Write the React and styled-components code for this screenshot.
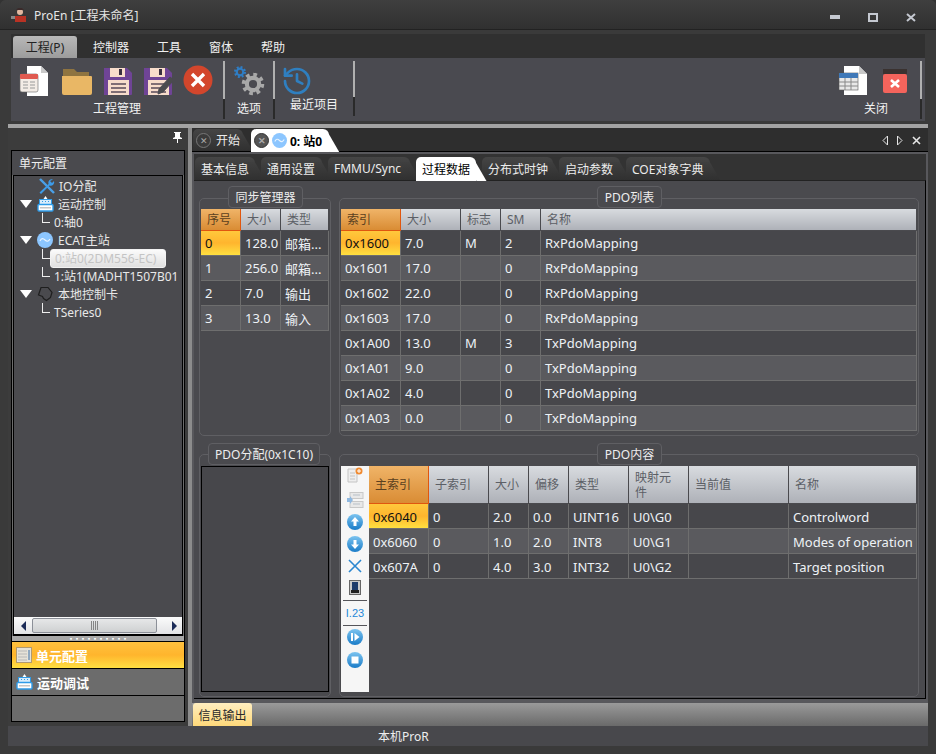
import React from "react";
import styled, { createGlobalStyle } from "styled-components";
import { History } from "lucide-react";

const GlobalStyle = createGlobalStyle`
  html, body { margin: 0; padding: 0; background: #333; }
  body { font-family: "Noto Sans", "Noto Sans CJK SC", sans-serif; font-size: 12px; color: #e8e8e8; }
  * { box-sizing: border-box; }
`;

const Window = styled.div`
  width: 936px;
  height: 754px;
  display: flex;
  flex-direction: column;
  padding: 0 8px 8px;
  overflow: hidden;
  background: #3a3a3a;
  border-radius: 6px 6px 0 0;
`;

const TitleBar = styled.div`
  height: 30px;
  margin: 0 -8px;
  padding: 0 15px 0 11px;
  display: flex;
  align-items: center;
  gap: 7px;
  background: linear-gradient(#3f3f3f, #303030);
  border-bottom: 1px solid #222;
`;

const TitleText = styled.span`
  flex: 1;
  font-size: 12px;
  color: #e6e6e6;
`;

const WinControls = styled.div`
  display: flex;
  gap: 28px;
  margin: 6px 5px 0 0;
  align-items: center;
`;

const MenuStrip = styled.div`
  height: 24px;
  margin: 4px 3px 0;
  padding-left: 2px;
  display: flex;
  align-items: flex-end;
  background: #303030;
`;

const MenuTab = styled.div`
  height: 22px;
  width: ${(p) => p.$w}px;
  display: flex;
  align-items: center;
  justify-content: center;
  font-size: 12px;
  border-radius: 3px 3px 0 0;
  color: ${(p) => (p.$active ? "#222" : "#f0f0f0")};
  background: ${(p) => (p.$active ? "linear-gradient(#b8b8b8, #9c9c9c)" : "transparent")};
`;

const Ribbon = styled.div`
  height: 63px;
  margin: 0 3px;
  display: flex;
  background: #4a4a50;
`;

const RibbonGroup = styled.div`
  width: ${(p) => p.$w}px;
  margin-right: ${(p) => p.$mr || 0}px;
  height: 63px;
  display: flex;
  flex-direction: column;
  align-items: center;
`;

const RibbonIcons = styled.div`
  height: 39px;
  width: 100%;
  display: flex;
  align-items: flex-start;
  justify-content: ${(p) => (p.$start ? "flex-start" : "center")};
  gap: ${(p) => p.$gap || 0}px;
  padding: 7px ${(p) => p.$pr || 0}px 0 ${(p) => p.$pl || 0}px;
`;

const RibbonLabel = styled.div`
  font-size: 12px;
  line-height: 16px;
  margin-top: ${(p) => p.$mt || 0}px;
  color: #f2f2f2;
  white-space: nowrap;
`;

const RibbonSep = styled.div`
  width: 2px;
  height: ${(p) => p.$h || 58}px;
  margin-top: 3px;
  background: linear-gradient(#b0b0b0 0 65%, #2a2a2a 65%);
`;

const Spacer = styled.div`
  flex: 1;
`;

const RibbonEnd = styled.div`
  flex: 0 0 3px;
`;

const Main = styled.div`
  flex: 1;
  margin-top: 3px;
  display: flex;
  border-top: 4px solid #a3a3a3;
  min-height: 0;
`;

const LeftColumn = styled.div`
  width: 180px;
  display: flex;
  flex-direction: column;
  padding: 0 3px 4px;
  background: #3c3c3c;
`;

const PinRow = styled.div`
  height: 22px;
  display: flex;
  justify-content: flex-end;
  align-items: center;
  padding: 0 3px 4px 0;
`;

const LeftPanel = styled.div`
  flex: 1;
  display: flex;
  flex-direction: column;
  background: #6c6c6c;
  border: 1px solid #000;
  min-height: 0;
`;

const PanelHeader = styled.div`
  height: 24px;
  flex: none;
  padding-left: 7px;
  display: flex;
  align-items: center;
  background: #4a4a4e;
  font-size: 12px;
  color: #eee;
`;

const TreeBox = styled.div`
  flex: 1;
  position: relative;
  margin: 0 1px;
  border: 1px solid #000;
  border-bottom-width: 2px;
  background: #4a4a4e;
  display: flex;
  flex-direction: column;
  min-height: 0;
`;

const TreeBody = styled.div`
  flex: 1;
  overflow: hidden;
  padding-top: 1px;
`;

const TreeRow = styled.div`
  height: 18px;
  display: flex;
  align-items: center;
  white-space: nowrap;
  font-size: 12px;
  color: #e8e8e8;
  padding-left: ${(p) => p.$indent}px;
`;

const Expander = styled.span`
  width: 0;
  height: 0;
  margin-right: 4px;
  border-left: 6px solid transparent;
  border-right: 6px solid transparent;
  border-top: 8px solid #fff;
`;

const IconSlot = styled.span`
  width: 18px;
  height: 18px;
  margin-right: 4px;
  display: inline-flex;
  align-items: center;
  justify-content: center;
  flex: none;
`;

const Elbow = styled.span`
  width: 8px;
  height: 10px;
  margin-top: -8px;
  margin-right: 4px;
  flex: none;
  border-left: 1px solid #eee;
  border-bottom: 1px solid #eee;
`;

const SelectedLabel = styled.span`
  position: relative;
  margin-left: -4px;
  padding: 0 4px;
  height: 19px;
  line-height: 18px;
  width: 116px;
  overflow: hidden;
  border-radius: 3px;
  border: 1px solid #f2f2f2;
  color: #c4c4c4;
  background: linear-gradient(#fafafa, #e0e0e0);
`;

const ScrollBar = styled.div`
  height: 17px;
  flex: none;
  display: flex;
  align-items: center;
  padding: 0 2px 0 7px;
  background: linear-gradient(#fbfbfb, #e2e3e5);
`;

const ScrollArrow = styled.span`
  width: 0;
  height: 0;
  border-top: 5px solid transparent;
  border-bottom: 5px solid transparent;
  ${(p) => (p.$right ? "border-left: 5px solid #1c2c58;" : "border-right: 5px solid #1c2c58;")}
`;

const ScrollThumb = styled.div`
  width: 125px;
  height: 15px;
  margin: 0 15px 0 6px;
  border: 1px solid #8c9098;
  border-radius: 2px;
  background: linear-gradient(#e6e7e8, #cfd1d2);
  display: flex;
  align-items: center;
  justify-content: center;
  gap: 1px;
`;

const GripLine = styled.span`
  width: 1px;
  height: 9px;
  background: #858585;
`;

const Splitter = styled.div`
  height: 6px;
  flex: none;
  padding-top: 1px;
  display: flex;
  justify-content: center;
  background: #a8a8a8;
  border-bottom: 1px solid #000;
  color: #fff;
  font-size: 6px;
  line-height: 4px;
  letter-spacing: 0;
`;

const NavItem = styled.div`
  height: 27px;
  flex: none;
  padding-left: 4px;
  display: flex;
  align-items: center;
  gap: 4px;
  font-size: 13px;
  font-weight: 700;
  color: #fff;
  border-bottom: 1px solid #000;
  background: ${(p) => (p.$active ? "linear-gradient(#ffc13e, #ffb52d 50%, #ffdf42)" : "#6c6c6c")};
`;

const NavRest = styled.div`
  height: 25px;
  flex: none;
  background: #6c6c6c;
`;

const VSplit = styled.div`
  width: 4px;
  background: #8c8c8c;
`;

const RightColumn = styled.div`
  flex: 1;
  display: flex;
  flex-direction: column;
  min-width: 0;
`;

const DocTabs = styled.div`
  height: 24px;
  flex: none;
  padding: 2px 0 0 1px;
  display: flex;
  align-items: flex-end;
  gap: 8px;
  background: #2e2e2e;
  border-bottom: 1px solid #000;
`;

const Tab = styled.div`
  position: relative;
  height: ${(p) => (p.$h || 22) + (p.$active ? 1 : 0)}px;
  margin-bottom: ${(p) => (p.$active ? -1 : 0)}px;
  width: ${(p) => p.$w}px;
  padding-left: ${(p) => p.$pl || 6}px;
  flex: none;
  display: flex;
  align-items: center;
  gap: ${(p) => p.$gap || 0}px;
  font-size: 12px;
  white-space: nowrap;
  font-weight: ${(p) => (p.$bold ? 700 : 400)};
  color: ${(p) => (p.$active ? "#000" : "#ececec")};
  background: ${(p) => (p.$active ? "#fff" : "linear-gradient(#454545, #303030)")};
  border-radius: 5px 6px 0 0;
  z-index: ${(p) => (p.$active ? 2 : 1)};
  &::after {
    content: "";
    position: absolute;
    top: 5px;
    bottom: 0;
    right: -5px;
    width: 10px;
    background: ${(p) => (p.$active ? "#fff" : "linear-gradient(#3f3f3f, #303030)")};
    transform: skewX(30deg);
    z-index: -1;
  }
`;

const TabClose = styled.span`
  width: 15px;
  height: 15px;
  border-radius: 50%;
  display: inline-flex;
  align-items: center;
  justify-content: center;
  background: ${(p) => (p.$dark ? "#555" : "#3a3a3a")};
  border: 1px solid ${(p) => (p.$dark ? "#333" : "#777")};
  color: #aaa;
  font-size: 9px;
  line-height: 1;
`;

const DocControls = styled.div`
  margin-left: auto;
  height: 22px;
  padding-right: 7px;
  display: flex;
  align-items: center;
  gap: 9px;
`;

const DocPanel = styled.div`
  height: 551px;
  flex: none;
  display: flex;
  flex-direction: column;
  padding: 2px 2px 4px 2px;
  background: #58585c;
`;

const SubTabs = styled.div`
  height: 26px;
  flex: none;
  padding: 3px 0 0 1px;
  display: flex;
  align-items: flex-end;
  gap: 6px;
  background: #333;
`;

const Content = styled.div`
  flex: 1;
  display: grid;
  grid-template-columns: 132px 580px;
  grid-template-rows: 238px 243px;
  gap: 18px 8px;
  padding: 17px 0 0 5px;
  background: #4a4a4e;
  border-top: 1px solid #222;
  border-right: 1px solid #000;
  border-bottom: 1px solid #000;
`;

const Group = styled.div`
  position: relative;
  padding: ${(p) => p.$pt || 10}px 1px 0;
  border: 1px solid #5f5f63;
  border-radius: 5px;
`;

const Legend = styled.div`
  position: absolute;
  top: ${(p) => p.$top || -13}px;
  left: ${(p) => p.$left}px;
  width: ${(p) => p.$w}px;
  height: 22px;
  display: flex;
  align-items: center;
  justify-content: center;
  border: 1px solid #5f5f63;
  border-radius: 4px;
  background: #4a4a4e;
  font-size: 12px;
  white-space: nowrap;
  color: #eee;
  z-index: 2;
`;

const HeadRow = styled.div`
  display: grid;
  grid-template-columns: ${(p) => p.$cols};
  height: ${(p) => p.$h || 22}px;
`;

const HeadCell = styled.div`
  padding: 0 6px;
  display: flex;
  align-items: center;
  font-size: 12px;
  line-height: 15px;
  color: ${(p) => (p.$sel ? "#5a4020" : "#5c5f66")};
  background: ${(p) => (p.$sel ? "linear-gradient(#f0b468, #d98c34)" : "linear-gradient(#d8dbdf, #aeb1b8)")};
  border-right: 1px solid ${(p) => (p.$sel ? "#e0560f" : "#4a4a4e")};
  border-bottom: 1px solid ${(p) => (p.$sel ? "#e0560f" : "#4a4a4e")};
`;

const DataRow = styled.div`
  display: grid;
  grid-template-columns: ${(p) => p.$cols};
  height: 25px;
  background: ${(p) => (p.$alt ? "#5a5a5e" : "#47474b")};
`;

const DataCell = styled.div`
  padding: ${(p) => (p.$low ? 1 : 0)}px 3px 0 4px;
  display: flex;
  align-items: center;
  font-size: 13px;
  white-space: nowrap;
  overflow: hidden;
  color: ${(p) => (p.$sel ? "#111" : "#eef2f6")};
  background: ${(p) => (p.$sel ? "linear-gradient(#ffc83c, #ffb52e 50%, #ffe040)" : "transparent")};
  border-right: 1px solid #6e6e6e;
  border-bottom: 1px solid #6e6e6e;
`;

const BlackBox = styled.div`
  height: 226px;
  border: 1px solid #000;
  background: #47474b;
`;

const PdoContent = styled.div`
  height: 226px;
  display: flex;
`;

const ToolBar = styled.div`
  width: 28px;
  display: flex;
  flex-direction: column;
  align-items: center;
  background: #f6f6f6;
`;

const ToolSlot = styled.div`
  height: ${(p) => p.$h || 22}px;
  margin-top: ${(p) => p.$mt || 0}px;
  flex: none;
  display: flex;
  align-items: center;
  justify-content: center;
`;

const ToolSep = styled.div`
  width: 24px;
  height: 1px;
  margin-top: ${(p) => p.$mt || 0}px;
  flex: none;
  background: #55555a;
`;

const ToolText = styled.div`
  height: 24px;
  flex: none;
  display: flex;
  align-items: center;
  font-family: "Liberation Sans", sans-serif;
  font-size: 11px;
  color: #1e88d8;
`;

const ContentTable = styled.div`
  flex: 1;
`;

const InfoBar = styled.div`
  height: 23px;
  flex: none;
  padding-left: 1px;
  display: flex;
  align-items: flex-end;
  background: linear-gradient(#9a9a9a, #6a6a6a);
`;

const InfoTab = styled.div`
  width: 59px;
  height: 23px;
  display: flex;
  align-items: center;
  justify-content: center;
  font-size: 12px;
  color: #2a2a2a;
  border-radius: 3px 3px 0 0;
  background: linear-gradient(#ffeec0, #ffd97a);
`;

const StatusBar = styled.div`
  height: 20px;
  flex: none;
  padding-left: 370px;
  display: flex;
  align-items: center;
  background: #48484c;
  font-size: 12px;
  color: #eee;
`;

// ---- drawings ----

const AppLogo = () => (
  <svg width="16" height="16" viewBox="0 0 16 16">
    <rect x="0" y="9" width="7" height="3" fill="#888" />
    <rect x="4" y="9" width="11" height="6" fill="#b83224" />
    <circle cx="9" cy="5" r="3" fill="#e2b8a0" />
    <path d="M5 3h8l-2-2H7z" fill="#3a2a2a" />
  </svg>
);

const NewDocIcon = () => (
  <svg width="32" height="32" viewBox="0 0 32 32">
    <path d="M8 1h14l7 7v23H8z" fill="#fff" />
    <path d="M22 1l7 7h-7z" fill="#c9c9c9" />
    <rect x="1" y="9" width="18" height="18" rx="2" fill="#f3ece6" stroke="#666" strokeWidth="0.6" />
    <rect x="1" y="9" width="18" height="5" rx="1" fill="#e05a50" />
    <path d="M4 17h5M11 17h5M4 20h5M11 20h5M4 23h5M11 23h5" stroke="#999" strokeWidth="1.2" />
  </svg>
);

const FolderIcon = () => (
  <svg width="32" height="32" viewBox="0 0 32 32">
    <path d="M2 4h11l3 3h12v6H2z" fill="#8f7440" />
    <path d="M1 11h29a1 1 0 0 1 1 1v16a2 2 0 0 1-2 2H3a2 2 0 0 1-2-2z" fill="#e9b765" />
  </svg>
);

const SaveIcon = ({ pencil }) => (
  <svg width="30" height="32" viewBox="0 0 30 32">
    <path d="M1 3h23l5 5v21a1 1 0 0 1-1 1H1z" fill="#6f4496" />
    <rect x="7" y="3" width="15" height="9" fill="#f7dccb" />
    <rect x="16" y="4" width="3" height="6" fill="#3a3040" />
    <rect x="5" y="15" width="21" height="15" fill="#f7dccb" />
    <path d="M8 19h15M8 23h15M8 27h15" stroke="#5a4a5a" strokeWidth="1.3" />
    {pencil && <path d="M15 29l1-5L27 12l4 3-11 12z" fill="#4b4b4f" stroke="#4a4a50" strokeWidth="1" />}
  </svg>
);

const CloseBall = () => (
  <svg width="30" height="30" viewBox="0 0 30 30">
    <circle cx="15" cy="15" r="14.5" fill="#d3462c" />
    <path d="M9 9l12 12M21 9L9 21" stroke="#fff" strokeWidth="3.4" />
  </svg>
);

// body ring plus eight dashes round it for the teeth
const Gear = ({ cx, cy, r, color }) => (
  <g fill="none" stroke={color}>
    <circle cx={cx} cy={cy} r={r * 0.82} strokeWidth={r * 0.55} />
    <circle
      cx={cx}
      cy={cy}
      r={r * 1.2}
      strokeWidth={r * 0.6}
      strokeDasharray={`${r * 0.47} ${r * 0.472}`}
    />
  </g>
);

const GearsIcon = () => (
  <svg width="32" height="32" viewBox="0 0 32 32">
    <Gear cx={7} cy={7} r={4} color="#2f7dc4" />
    <Gear cx={20} cy={19} r={7.5} color="#a8a8a8" />
  </svg>
);

const TableDocIcon = () => (
  <svg width="30" height="31" viewBox="0 0 30 31">
    <path d="M6 1h15l8 8v21H6z" fill="#fff" />
    <path d="M21 1l8 8h-8z" fill="#c8c8c8" />
    <rect x="1" y="8" width="19" height="17" fill="#e8e8e8" stroke="#555" strokeWidth="0.6" />
    <rect x="1" y="8" width="19" height="5" fill="#3f78b8" />
    <path d="M7 13v12M13 13v12M1 17h19M1 21h19" stroke="#888" strokeWidth="1" />
  </svg>
);

const RedBoxIcon = () => (
  <svg width="24" height="28" viewBox="0 -4 24 28">
    <rect x="0" y="0" width="24" height="5" fill="#3a3230" />
    <rect x="0" y="5" width="24" height="19" rx="2" fill="#f4645c" />
    <path d="M8 11l8 7M16 11l-8 7" stroke="#fff" strokeWidth="2.6" />
  </svg>
);

const ToolsIcon = () => (
  <svg width="17" height="17" viewBox="0 0 17 17">
    <path d="M2 1l14 14" stroke="#4aa0e8" strokeWidth="2.4" />
    <path d="M15 1.5a3.5 3.5 0 0 0-4.5 4.5L1.5 14.5 3 16l8.5-8.5A3.5 3.5 0 0 0 16 3l-2 2-2-2z" fill="#3d9be8" />
  </svg>
);

const MotionIcon = () => (
  <svg width="17" height="16" viewBox="0 0 17 16">
    <path d="M8.5 0l2 3h-4z" fill="#fff" />
    <rect x="2.5" y="3.5" width="12" height="5" fill="#d8ecfb" stroke="#2f9be8" />
    <path d="M5 5.5h1M8 5.5h1M11 5.5h1" stroke="#2f9be8" />
    <rect x="1" y="8.5" width="15" height="6.500" rx="1" fill="#fff" stroke="#2f9be8" strokeWidth="1.4" />
    <rect x="3" y="11" width="11" height="1.500" fill="#c4c4c4" />
  </svg>
);

const EcatIcon = ({ size = 16 }) => (
  <svg width={size} height={size} viewBox="0 0 16 16">
    <circle cx="8" cy="8" r="8" fill="#8cc6ff" />
    <path d="M3 9c1.5-3 3-3 5-1s3.5 1.5 5-1" fill="none" stroke="#e8f4ff" strokeWidth="1.2" />
  </svg>
);

const CardIcon = () => (
  <svg width="16" height="16" viewBox="0 0 16 16">
    <path d="M4 1.5h7l4 5-1.5 5-4 3-3-2-1-2-4-1.5z" fill="none" stroke="#1e1e1e" strokeWidth="1.2" />
  </svg>
);

const NavCardIcon = () => (
  <svg width="16" height="16" viewBox="0 0 16 16">
    <rect x="0.5" y="0.5" width="15" height="15" fill="#e6e2d8" stroke="#b09a70" />
    <path d="M2 4h9M2 7h9M2 10h9M2 13h9" stroke="#b8b8b8" />
    <rect x="12" y="3" width="2" height="10" fill="#8fa8c0" />
  </svg>
);

const PinIcon = () => (
  <svg width="9" height="11" viewBox="0 0 9 11">
    <path d="M1 0h7v1H7v4l2 1v1H5v4H4V7H0V6l2-1V1H1z" fill="#fff" />
  </svg>
);

const WinMin = () => (
  <svg width="10" height="5" viewBox="0 0 10 5"><rect width="10" height="4" fill="#c4c8d0" /></svg>
);
const WinMax = () => (
  <svg width="10" height="9" viewBox="0 0 10 9"><rect x="1" y="1" width="8" height="7" fill="none" stroke="#c4c8d0" strokeWidth="2" /></svg>
);
const WinClose = () => (
  <svg width="10" height="9" viewBox="0 0 10 9"><path d="M1 1l8 7M9 1L1 8" stroke="#c4c8d0" strokeWidth="2" /></svg>
);

const TriLeft = () => (
  <svg width="6" height="11" viewBox="0 0 6 11"><path d="M5.5 1L1 5.5l4.5 4.5z" fill="none" stroke="#e6e6e6" /></svg>
);
const TriRight = () => (
  <svg width="6" height="11" viewBox="0 0 6 11"><path d="M.5 1L5 5.5.5 10z" fill="none" stroke="#e6e6e6" /></svg>
);
const DocX = () => (
  <svg width="9" height="9" viewBox="0 0 9 9"><path d="M1 1l7 7M8 1L1 8" stroke="#e6e6e6" strokeWidth="1.6" /></svg>
);

const BlueBall = ({ children }) => (
  <svg width="16" height="16" viewBox="0 0 16 16">
    <defs>
      <linearGradient id="ball" x1="0" y1="0" x2="0" y2="1">
        <stop offset="0" stopColor="#7cc4f0" />
        <stop offset="1" stopColor="#1a7cc8" />
      </linearGradient>
    </defs>
    <circle cx="8" cy="8" r="8" fill="url(#ball)" />
    {children}
  </svg>
);

const DocAddIcon = () => (
  <svg width="16" height="16" viewBox="0 0 16 16">
    <path d="M1 2h9v13H1z" fill="#eee" stroke="#c4c4c4" />
    <path d="M3 6h5M3 9h5M3 12h5" stroke="#c4c4c4" />
    <circle cx="12" cy="4" r="3.5" fill="#f08a30" />
    <path d="M10 4h4M12 2v4" stroke="#fff" />
  </svg>
);

const ListDisabledIcon = () => (
  <svg width="17" height="16" viewBox="0 0 17 16">
    <rect x="3" y="0.5" width="13" height="6" fill="#e8e8e8" stroke="#c8c8c8" />
    <rect x="3" y="9.5" width="13" height="6" fill="#e8e8e8" stroke="#c8c8c8" />
    <path d="M6 3h7M6 12h7" stroke="#b8c0c8" />
    <path d="M0 6h3V4l3 4-3 4v-2H0z" fill="#8fb8e0" />
  </svg>
);

const BlueCross = () => (
  <svg width="14" height="14" viewBox="0 0 14 14">
    <path d="M1 1l12 12M13 1L1 13" stroke="#2a86d0" strokeWidth="1.6" />
  </svg>
);

const ChipIcon = () => (
  <svg width="12" height="15" viewBox="0 0 12 15">
    <rect x="0.5" y="0.5" width="11" height="14" fill="#c8c8c8" stroke="#666" />
    <rect x="3" y="2" width="6" height="8" fill="#1c3a6a" />
    <rect x="2" y="10" width="8" height="3" fill="#222" />
  </svg>
);

const Grip = () => (
  <>
    {[0, 1, 2, 3].map((i) => (
      <GripLine key={i} />
    ))}
  </>
);

// ---- data ----

const syncCols = "40px 40px 48px";
const syncHead = ["序号", "大小", "类型"];
const syncRows = [
  ["0", "128.0", "邮箱..."],
  ["1", "256.0", "邮箱..."],
  ["2", "7.0", "输出"],
  ["3", "13.0", "输入"],
];

const pdoCols = "60px 60px 40px 40px 376px";
const pdoHead = ["索引", "大小", "标志", "SM", "名称"];
const pdoRows = [
  ["0x1600", "7.0", "M", "2", "RxPdoMapping"],
  ["0x1601", "17.0", "", "0", "RxPdoMapping"],
  ["0x1602", "22.0", "", "0", "RxPdoMapping"],
  ["0x1603", "17.0", "", "0", "RxPdoMapping"],
  ["0x1A00", "13.0", "M", "3", "TxPdoMapping"],
  ["0x1A01", "9.0", "", "0", "TxPdoMapping"],
  ["0x1A02", "4.0", "", "0", "TxPdoMapping"],
  ["0x1A03", "0.0", "", "0", "TxPdoMapping"],
];

const contentCols = "60px 60px 40px 40px 60px 60px 100px 128px";
const contentHead = ["主索引", "子索引", "大小", "偏移", "类型", "映射元件", "当前值", "名称"];
const contentRows = [
  ["0x6040", "0", "2.0", "0.0", "UINT16", "U0\\G0", "", "Controlword"],
  ["0x6060", "0", "1.0", "2.0", "INT8", "U0\\G1", "", "Modes of operation"],
  ["0x607A", "0", "4.0", "3.0", "INT32", "U0\\G2", "", "Target position"],
];

const subTabs = [
  ["基本信息", 60],
  ["通用设置", 61],
  ["FMMU/Sync", 82],
  ["过程数据", 60],
  ["分布式时钟", 71],
  ["启动参数", 61],
  ["COE对象字典", 84],
];

const Table = ({ cols, head, rows, headHeight, low }) => (
  <div>
    <HeadRow $cols={cols} $h={headHeight}>
      {head.map((h, i) => (
        <HeadCell key={h} $sel={i === 0}>
          {h}
        </HeadCell>
      ))}
    </HeadRow>
    {rows.map((r, i) => (
      <DataRow key={i} $cols={cols} $alt={i % 2 === 1}>
        {r.map((c, j) => (
          <DataCell key={j} $low={low} $sel={i === 0 && j === 0}>
            {c}
          </DataCell>
        ))}
      </DataRow>
    ))}
  </div>
);

const App = () => {
  return (
    <Window>
      <GlobalStyle />
      <TitleBar>
        <AppLogo />
        <TitleText>ProEn [工程未命名]</TitleText>
        <WinControls>
          <WinMin />
          <WinMax />
          <WinClose />
        </WinControls>
      </TitleBar>

      <MenuStrip>
        <MenuTab $w={64} $active>工程(P)</MenuTab>
        <MenuTab $w={68}>控制器</MenuTab>
        <MenuTab $w={48}>工具</MenuTab>
        <MenuTab $w={56}>窗体</MenuTab>
        <MenuTab $w={48}>帮助</MenuTab>
      </MenuStrip>

      <Ribbon>
        <RibbonGroup $w={212}>
          <RibbonIcons $gap={10} $pr={2}>
            <NewDocIcon />
            <FolderIcon />
            <SaveIcon />
            <SaveIcon pencil />
            <CloseBall />
          </RibbonIcons>
          <RibbonLabel $mt={4}>工程管理</RibbonLabel>
        </RibbonGroup>
        <RibbonSep />
        <RibbonGroup $w={48}>
          <RibbonIcons>
            <GearsIcon />
          </RibbonIcons>
          <RibbonLabel $mt={4}>选项</RibbonLabel>
        </RibbonGroup>
        <RibbonSep />
        <RibbonGroup $w={78}>
          <RibbonIcons $start $pl={6}>
            <History size={32} color="#2f7fc0" strokeWidth={2} />
          </RibbonIcons>
          <RibbonLabel>最近项目</RibbonLabel>
        </RibbonGroup>
        <RibbonSep $h={55} />
        <Spacer />
        <RibbonGroup $w={80} $mr={4}>
          <RibbonIcons $gap={15} $pr={7}>
            <TableDocIcon />
            <RedBoxIcon />
          </RibbonIcons>
          <RibbonLabel $mt={4}>关闭</RibbonLabel>
        </RibbonGroup>
        <RibbonSep />
        <RibbonEnd />
      </Ribbon>

      <Main>
        <LeftColumn>
          <PinRow>
            <PinIcon />
          </PinRow>
          <LeftPanel>
            <PanelHeader>单元配置</PanelHeader>
            <TreeBox>
              <TreeBody>
                <TreeRow $indent={23}>
                  <IconSlot>
                    <ToolsIcon />
                  </IconSlot>
                  IO分配
                </TreeRow>
                <TreeRow $indent={6}>
                  <Expander />
                  <IconSlot>
                    <MotionIcon />
                  </IconSlot>
                  运动控制
                </TreeRow>
                <TreeRow $indent={28}>
                  <Elbow />
                  0:轴0
                </TreeRow>
                <TreeRow $indent={6}>
                  <Expander />
                  <IconSlot>
                    <EcatIcon />
                  </IconSlot>
                  ECAT主站
                </TreeRow>
                <TreeRow $indent={28}>
                  <Elbow />
                  <SelectedLabel>0:站0(2DM556-EC)</SelectedLabel>
                </TreeRow>
                <TreeRow $indent={28}>
                  <Elbow />
                  1:站1(MADHT1507B01
                </TreeRow>
                <TreeRow $indent={6}>
                  <Expander />
                  <IconSlot>
                    <CardIcon />
                  </IconSlot>
                  本地控制卡
                </TreeRow>
                <TreeRow $indent={28}>
                  <Elbow />
                  TSeries0
                </TreeRow>
              </TreeBody>
              <ScrollBar>
                <ScrollArrow />
                <ScrollThumb>
                  <Grip />
                </ScrollThumb>
                <ScrollArrow $right />
              </ScrollBar>
            </TreeBox>
            <Splitter>▪▪▪▪▪▪▪▪▪▪</Splitter>
            <NavItem $active>
              <NavCardIcon />
              单元配置
            </NavItem>
            <NavItem>
              <MotionIcon />
              运动调试
            </NavItem>
            <NavRest />
          </LeftPanel>
        </LeftColumn>

        <VSplit />

        <RightColumn>
          <DocTabs>
            <Tab $w={50} $pl={3} $gap={5}>
              <TabClose>✕</TabClose>
              开始
            </Tab>
            <Tab $w={78} $pl={3} $gap={3} $active $bold>
              <TabClose $dark>✕</TabClose>
              <EcatIcon size={15} />
              0: 站0
            </Tab>
            <DocControls>
              <TriLeft />
              <TriRight />
              <DocX />
            </DocControls>
          </DocTabs>

          <DocPanel>
            <SubTabs>
              {subTabs.map(([label, w]) => (
                <Tab key={label} $w={w} $h={23} $active={label === "过程数据"}>
                  {label}
                </Tab>
              ))}
            </SubTabs>
            <Content>
              <Group>
                <Legend $left={28} $w={75}>同步管理器</Legend>
                <Table cols={syncCols} head={syncHead} rows={syncRows} />
              </Group>
              <Group>
                <Legend $left={257} $w={65}>PDO列表</Legend>
                <Table cols={pdoCols} head={pdoHead} rows={pdoRows} />
              </Group>
              <Group $pt={11}>
                <Legend $left={8} $w={112} $top={-12}>PDO分配(0x1C10)</Legend>
                <BlackBox />
              </Group>
              <Group $pt={11}>
                <Legend $left={257} $w={65} $top={-12}>PDO内容</Legend>
                <PdoContent>
                  <ToolBar>
                    <ToolSlot $h={18}><DocAddIcon /></ToolSlot>
                    <ToolSlot $mt={5}><ListDisabledIcon /></ToolSlot>
                    <ToolSlot>
                      <BlueBall><path d="M8 3l4 4.5H9.5V12h-3V7.5H4z" fill="#fff" /></BlueBall>
                    </ToolSlot>
                    <ToolSlot>
                      <BlueBall><path d="M8 13l4-4.5H9.5V4h-3v4.5H4z" fill="#fff" /></BlueBall>
                    </ToolSlot>
                    <ToolSlot><BlueCross /></ToolSlot>
                    <ToolSlot $h={20}><ChipIcon /></ToolSlot>
                    <ToolSep $mt={3} />
                    <ToolText>I.23</ToolText>
                    <ToolSep />
                    <ToolSlot>
                      <BlueBall><path d="M4 4h2v8H4zM7.5 4l5 4-5 4z" fill="#fff" /></BlueBall>
                    </ToolSlot>
                    <ToolSlot $mt={1}>
                      <BlueBall><rect x="4.5" y="4.5" width="7" height="7" fill="#fff" /></BlueBall>
                    </ToolSlot>
                  </ToolBar>
                  <ContentTable>
                    <Table cols={contentCols} head={contentHead} rows={contentRows} headHeight={38} low />
                  </ContentTable>
                </PdoContent>
              </Group>
            </Content>
          </DocPanel>

          <InfoBar>
            <InfoTab>信息输出</InfoTab>
          </InfoBar>
        </RightColumn>
      </Main>

      <StatusBar>本机ProR</StatusBar>
    </Window>
  );
};

export default App;
